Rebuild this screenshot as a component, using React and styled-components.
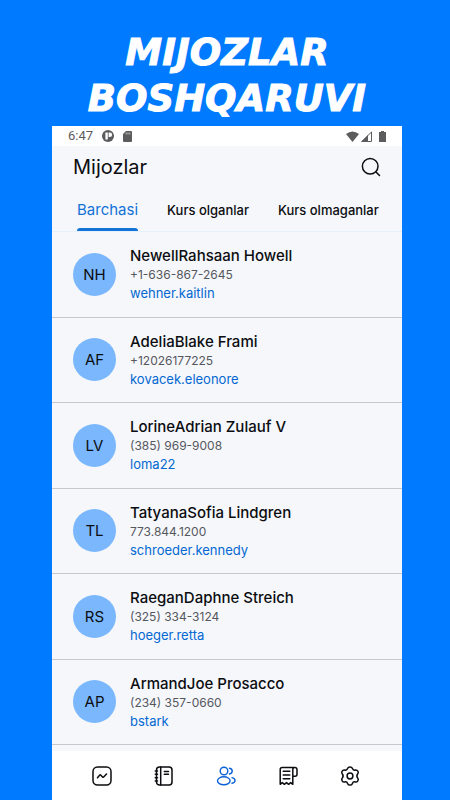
import React, { useState } from "react";
import styled, { createGlobalStyle } from "styled-components";

const colors = {
  brand: "#007bff",
  link: "#0468d2",
  avatar: "#7ab7fd",
  surface: "#f5f7fb",
  divider: "#c6c8ce",
  status: "#5c5c5e",
};

const GlobalStyle = createGlobalStyle`
  * {
    box-sizing: border-box;
  }

  body {
    margin: 0;
    background: ${colors.brand};
    font-family: Inter, "Open Sans", sans-serif;
    color: #0c0d10;
  }

  button {
    border: 0;
    padding: 0;
    background: none;
    font: inherit;
    color: inherit;
    cursor: pointer;
  }

  svg {
    display: block;
  }
`;

const Page = styled.div`
  min-height: 100vh;
  display: flex;
  flex-direction: column;
  padding: 30px 48px 0 52px;
`;

const Heading = styled.h1`
  margin: 0;
  height: 96px;
  font-family: "DejaVu Sans", sans-serif;
  font-size: 37px;
  font-weight: 700;
  font-style: italic;
  line-height: 46px;
  text-align: center;
  color: #fff;
  -webkit-text-stroke: 1px #fff;
`;

const Screen = styled.main`
  flex: 1;
  display: flex;
  flex-direction: column;
  background: ${colors.surface};
`;

const StatusBar = styled.div`
  height: 20px;
  display: flex;
  align-items: center;
  justify-content: space-between;
  padding: 0 16px;
  background: #fff;
  color: ${colors.status};
  font-family: Roboto, sans-serif;
  font-size: 13px;
  line-height: 20px;
`;

const StatusGroup = styled.div`
  display: flex;
  align-items: center;
  gap: ${({ $gap }) => $gap}px;
`;

const Header = styled.header`
  height: 42px;
  display: flex;
  align-items: center;
  justify-content: space-between;
  padding: 0 20px 0 21px;
`;

const Title = styled.h2`
  margin: 0;
  font-size: 20px;
  font-weight: 400;
  line-height: 24px;
`;

const Tabs = styled.nav`
  height: 44px;
  display: flex;
  gap: 29px;
  padding: 0 19px 0 25px;
  border-bottom: 1px solid #e4f0fb;
`;

const Tab = styled.button`
  position: relative;
  font-size: ${({ $active }) => ($active ? 15 : 13)}px;
  font-weight: ${({ $active }) => ($active ? 400 : 500)};
  line-height: 20px;
  white-space: nowrap;
  color: ${({ $active }) => ($active ? "#1272d6" : "inherit")};

  &::after {
    content: "";
    display: ${({ $active }) => ($active ? "block" : "none")};
    position: absolute;
    left: 0;
    right: 0;
    bottom: 0;
    height: 3px;
    border-radius: 3px 3px 0 0;
    background: #1272d6;
  }
`;

const ClientList = styled.ul`
  flex: 1;
  display: flex;
  flex-direction: column;
  margin: 0;
  padding: 0 0 6px;
  list-style: none;
`;

const ClientRow = styled.li`
  flex: 1;
  display: flex;
  align-items: center;
  gap: 14px;
  padding: 0 21px;
  border-bottom: 1px solid ${colors.divider};
`;

const Avatar = styled.div`
  flex: none;
  width: 43px;
  height: 43px;
  display: flex;
  align-items: center;
  justify-content: center;
  border-radius: 50%;
  background: ${colors.avatar};
  font-size: 15px;
`;

const ClientInfo = styled.div`
  display: flex;
  flex-direction: column;
  align-items: flex-start;
  font-size: 13px;
  line-height: 18px;
`;

const ClientName = styled.span`
  font-size: 15px;
  font-weight: 500;
  line-height: 20px;
`;

const Phone = styled.span`
  font-size: 12px;
  color: #55585e;
`;

const Username = styled.a`
  color: ${colors.link};
  text-decoration: none;
`;

const BottomNav = styled.nav`
  height: 49px;
  display: flex;
  padding: 0 21px 0 19px;
  background: #fff;
`;

const NavButton = styled.button`
  flex: 1;
  display: flex;
  align-items: center;
  justify-content: center;
  color: ${({ $active }) => ($active ? "#0b62d6" : "#0c0d10")};
`;

const LineIcon = ({ size = 22, width = 1.5, children }) => (
  <svg
    width={size}
    height={size}
    viewBox="0 0 22 22"
    fill="none"
    stroke="currentColor"
    strokeWidth={width}
    strokeLinecap="round"
    strokeLinejoin="round"
    aria-hidden="true"
  >
    {children}
  </svg>
);

const NAV_ITEMS = [
  {
    id: "stats",
    label: "Statistika",
    icon: (
      <LineIcon>
        <rect x="2" y="2" width="18" height="18" rx="4.5" />
        <path d="M6.5 12.8 8.6 10.2Q9.2 9.5 9.9 10.2L11.5 11.9Q12.2 12.6 12.9 11.8L15.5 9" />
      </LineIcon>
    ),
  },
  {
    id: "courses",
    label: "Kurslar",
    icon: (
      <LineIcon>
        <rect x="3.5" y="2" width="15.5" height="18" rx="3" />
        <path d="M7.7 2v18M11.3 6.4h4.2M11.3 9.3h4.2M2.3 6h2.2M2.3 9.3h2.2M2.3 12.7h2.2M2.3 16h2.2" />
      </LineIcon>
    ),
  },
  {
    id: "clients",
    label: "Mijozlar",
    icon: (
      <LineIcon width={1.4}>
        <circle cx="9" cy="6" r="3.8" />
        <ellipse cx="8.8" cy="15.8" rx="6.3" ry="4" />
        <path d="M14.4 3.2c1.7.2 2.8 1.3 2.8 2.9s-1.1 2.7-2.8 2.9M17 12.6c1.9.4 3 1.5 3 2.8 0 1.5-1.1 2.5-3 2.9" />
      </LineIcon>
    ),
  },
  {
    id: "payments",
    label: "To'lovlar",
    icon: (
      <LineIcon>
        <path d="M17.8 2.6H5.2Q3.2 2.6 3.2 4.6V19.3L5.3 17.6 7.4 19.3 9.5 17.6 11.6 19.3 13.7 17.6 15.8 19.3V4.6Q15.8 2.6 17.8 2.6 20 2.6 20 4.8V9.2Q20 11.2 18 11.2H15.8" />
        <path d="M6.2 6.3h6.6M6.2 10h6.6M6.2 13.7h6.6" />
      </LineIcon>
    ),
  },
  {
    id: "settings",
    label: "Sozlamalar",
    icon: (
      <LineIcon>
        <circle cx="11" cy="11" r="2.9" />
        <path d="M8.7 3.3C9.3 1.5 12.7 1.5 13.3 3.3 13.8 4.8 15 5.4 16.5 5 18.4 4.6 20.1 7.4 18.8 8.8 17.7 10.1 17.7 11.9 18.8 13.2 20.1 14.6 18.4 17.4 16.5 17 15 16.6 13.8 17.2 13.3 18.7 12.7 20.5 9.3 20.5 8.7 18.7 8.2 17.2 7 16.6 5.5 17 3.6 17.4 1.9 14.6 3.2 13.2 4.3 11.9 4.3 10.1 3.2 8.8 1.9 7.4 3.6 4.6 5.5 5 7 5.4 8.2 4.8 8.7 3.3Z" />
      </LineIcon>
    ),
  },
];

const TABS = ["Barchasi", "Kurs olganlar", "Kurs olmaganlar"];

const CLIENTS = [
  { initials: "NH", name: "NewellRahsaan Howell", phone: "+1-636-867-2645", username: "wehner.kaitlin" },
  { initials: "AF", name: "AdeliaBlake Frami", phone: "+12026177225", username: "kovacek.eleonore" },
  { initials: "LV", name: "LorineAdrian Zulauf V", phone: "(385) 969-9008", username: "loma22" },
  { initials: "TL", name: "TatyanaSofia Lindgren", phone: "773.844.1200", username: "schroeder.kennedy" },
  { initials: "RS", name: "RaeganDaphne Streich", phone: "(325) 334-3124", username: "hoeger.retta" },
  { initials: "AP", name: "ArmandJoe Prosacco", phone: "(234) 357-0660", username: "bstark" },
];

const App = () => {
  const [activeTab, setActiveTab] = useState(TABS[0]);
  const [activeNav, setActiveNav] = useState("clients");

  return (
    <Page>
      <GlobalStyle />
      <Heading>
        MIJOZLAR
        <br />
        BOSHQARUVI
      </Heading>
      <Screen>
        <StatusBar>
          <StatusGroup $gap={9}>
            <span>6:47</span>
            <svg width="12" height="12" viewBox="0 0 12 12" aria-hidden="true">
              <circle cx="6" cy="6" r="6" fill="currentColor" />
              <path d="M3.4 2.4H5.8v7.2H3.4zM6.6 2.4h1.2a2.3 2.3 0 0 1 0 4.6H6.6z" fill="#fff" />
            </svg>
            <svg width="9" height="11" viewBox="0 0 9 11" aria-hidden="true">
              <path d="M3 0h5a1 1 0 0 1 1 1v9a1 1 0 0 1-1 1H1a1 1 0 0 1-1-1V3z" fill="currentColor" />
              <path d="M3.2 1.5v2M5 1.5v2M6.8 1.5v2" stroke="#fff" strokeWidth="0.6" />
            </svg>
          </StatusGroup>
          <StatusGroup $gap={2}>
            <svg width="13" height="11" viewBox="0 0 13 11" aria-hidden="true">
              <path d="M0 3Q6.5-2 13 3L6.5 11z" fill="currentColor" />
            </svg>
            <svg width="16" height="11" viewBox="0 0 16 11" aria-hidden="true">
              <path d="M.8 10.5 10.5 1v9.5z" fill="none" stroke="currentColor" />
              <path d="M0 11 7 4v7z" fill="currentColor" />
            </svg>
            <svg width="7" height="11" viewBox="0 0 7 11" aria-hidden="true">
              <path d="M2 0h3v1h2v10H0V1h2z" fill="currentColor" />
            </svg>
          </StatusGroup>
        </StatusBar>

        <Header>
          <Title>Mijozlar</Title>
          <button type="button" aria-label="Qidirish">
            <LineIcon>
              <circle cx="10.2" cy="10.2" r="7.8" />
              <path d="m16 16 3.5 3.5" />
            </LineIcon>
          </button>
        </Header>

        <Tabs>
          {TABS.map((tab) => (
            <Tab
              key={tab}
              type="button"
              $active={tab === activeTab}
              onClick={() => setActiveTab(tab)}
            >
              {tab}
            </Tab>
          ))}
        </Tabs>

        <ClientList>
          {CLIENTS.map((client) => (
            <ClientRow key={client.username}>
              <Avatar>{client.initials}</Avatar>
              <ClientInfo>
                <ClientName>{client.name}</ClientName>
                <Phone>{client.phone}</Phone>
                <Username href={`#${client.username}`}>{client.username}</Username>
              </ClientInfo>
            </ClientRow>
          ))}
        </ClientList>

        <BottomNav>
          {NAV_ITEMS.map((item) => (
            <NavButton
              key={item.id}
              type="button"
              aria-label={item.label}
              $active={item.id === activeNav}
              onClick={() => setActiveNav(item.id)}
            >
              {item.icon}
            </NavButton>
          ))}
        </BottomNav>
      </Screen>
    </Page>
  );
};

export default App;
